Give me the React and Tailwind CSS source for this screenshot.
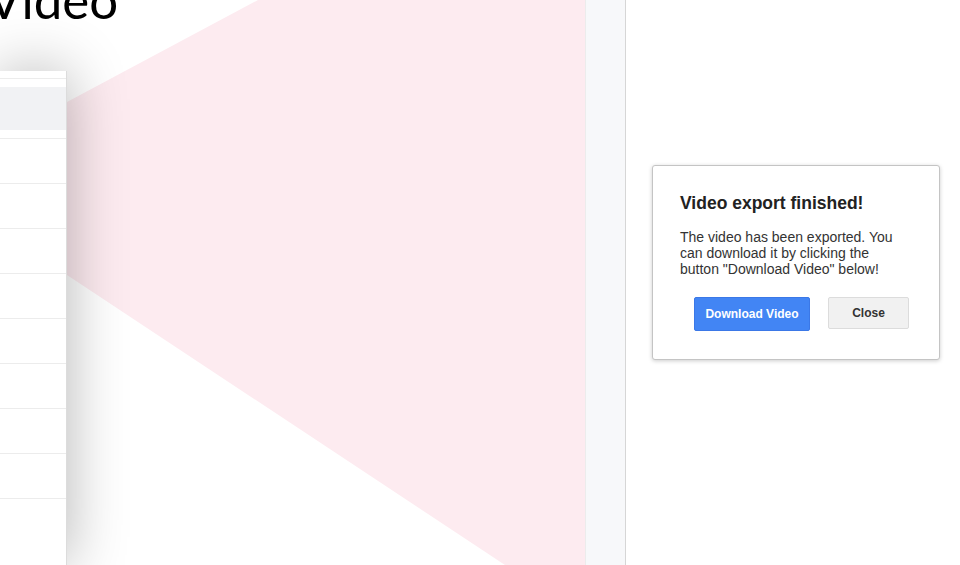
import React from 'react';

const ROWS = 9;

// Pink wedge fanning out from the preview card
function Wedge() {
  return (
    <svg className="absolute inset-0" width="585" height="565" viewBox="0 0 585 565">
      <polygon points="67,102 258,0 585,0 585,565 505,565 67,275" fill="#fdebf0" />
    </svg>
  );
}

function PreviewCard() {
  return (
    <div className="relative w-[67px] h-[494px] mt-[71px] overflow-hidden bg-white border-r border-[#dcdcdc] shadow-[0_0_60px_rgba(0,0,0,0.3)]">
      <div className="h-[7px]" />
      <div className="h-px bg-[#ececec]" />
      <div className="h-[8px]" />
      <div className="h-[43px] bg-[#f1f2f4]" />
      <div className="h-[8px]" />
      {Array.from({ length: ROWS }).map((_, i) => (
        <div key={i} className="h-[45px] border-t border-[#ececec]" />
      ))}
    </div>
  );
}

export default function App() {
  return (
    <div className="flex w-[960px] h-[565px] overflow-hidden bg-white" style={{ fontFamily: '"Liberation Sans", Arial, sans-serif' }}>
      {/* Editor canvas */}
      <div className="relative w-[585px] h-full overflow-hidden bg-white">
        <Wedge />
        <div
          className="absolute left-[-13px] top-[-26px] text-[51px] leading-none font-normal text-black"
          style={{ fontFamily: 'Lato, "DejaVu Sans", sans-serif' }}
        >
          Video
        </div>
        <PreviewCard />
      </div>

      {/* Side strip */}
      <div className="w-[41px] h-full bg-[#f7f8fa] border-l border-[#ececec] border-r border-r-[#d6d6d6]" />

      {/* Dialog area */}
      <div className="flex-1 h-full bg-white pt-[165px] pl-[26px]">
        <div className="w-[288px] bg-white border border-[#c4c4c4] rounded-[3px] shadow-[0_1px_4px_rgba(0,0,0,0.2)] pl-[27px] pr-[30px] pt-[27px] pb-[28px]">
          <h2 className="text-[17.5px] font-bold text-[#222] leading-[20px]">Video export finished!</h2>
          <p className="mt-[16px] text-[14px] leading-[16px] text-[#333]">
            The video has been exported. You can download it by clicking the button "Download Video" below!
          </p>
          <div className="flex gap-[18px] mt-[20px] pl-[14px]">
            <button className="w-[116px] h-[34px] bg-[#4285f4] rounded-[2px] border border-[#3b78e7] text-white text-[12px] font-bold">
              Download Video
            </button>
            <button className="w-[81px] h-[32px] bg-[#f1f1f1] rounded-[2px] border border-[#dcdcdc] text-[#333] text-[12px] font-bold">
              Close
            </button>
          </div>
        </div>
      </div>
    </div>
  );
}
